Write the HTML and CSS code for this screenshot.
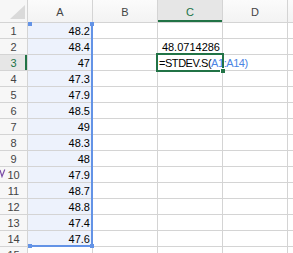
FILE: index.html
```html
<!DOCTYPE html>
<html lang="en">
<head>
  <meta charset="UTF-8">
  <title>STDEV.S sheet</title>
  <link rel="stylesheet" href="styles.css">
</head>
<body>
  <div class="sheet">
    <div class="grid">
      <div class="corner"><svg width="27" height="22" viewBox="0 0 27 22"><polygon points="10,19 25,19 25,5" fill="#dadada"/></svg></div>
      <div class="colhead">A</div>
      <div class="colhead">B</div>
      <div class="colhead active">C</div>
      <div class="colhead">D</div>
      <div class="colhead"></div>

      <div class="rowhead">1</div><div class="cell num sel">48.2</div><div class="cell"></div><div class="cell"></div><div class="cell"></div><div class="cell"></div>
      <div class="rowhead">2</div><div class="cell num sel">48.4</div><div class="cell"></div><div class="cell num">48.0714286</div><div class="cell"></div><div class="cell"></div>
      <div class="rowhead active">3</div><div class="cell num sel">47</div><div class="cell"></div><div class="cell current">=STDEV.S(<span class="ref">A1:A14)</span></div><div class="cell"></div><div class="cell"></div>
      <div class="rowhead">4</div><div class="cell num sel">47.3</div><div class="cell"></div><div class="cell"></div><div class="cell"></div><div class="cell"></div>
      <div class="rowhead">5</div><div class="cell num sel">47.9</div><div class="cell"></div><div class="cell"></div><div class="cell"></div><div class="cell"></div>
      <div class="rowhead">6</div><div class="cell num sel">48.5</div><div class="cell"></div><div class="cell"></div><div class="cell"></div><div class="cell"></div>
      <div class="rowhead">7</div><div class="cell num sel">49</div><div class="cell"></div><div class="cell"></div><div class="cell"></div><div class="cell"></div>
      <div class="rowhead">8</div><div class="cell num sel">48.3</div><div class="cell"></div><div class="cell"></div><div class="cell"></div><div class="cell"></div>
      <div class="rowhead">9</div><div class="cell num sel">48</div><div class="cell"></div><div class="cell"></div><div class="cell"></div><div class="cell"></div>
      <div class="rowhead">10</div><div class="cell num sel">47.9</div><div class="cell"></div><div class="cell"></div><div class="cell"></div><div class="cell"></div>
      <div class="rowhead">11</div><div class="cell num sel">48.7</div><div class="cell"></div><div class="cell"></div><div class="cell"></div><div class="cell"></div>
      <div class="rowhead">12</div><div class="cell num sel">48.8</div><div class="cell"></div><div class="cell"></div><div class="cell"></div><div class="cell"></div>
      <div class="rowhead">13</div><div class="cell num sel">47.4</div><div class="cell"></div><div class="cell"></div><div class="cell"></div><div class="cell"></div>
      <div class="rowhead">14</div><div class="cell num sel">47.6</div><div class="cell"></div><div class="cell"></div><div class="cell"></div><div class="cell"></div>
      <div class="rowhead">15</div><div class="cell"></div><div class="cell"></div><div class="cell"></div><div class="cell"></div><div class="cell"></div>
    </div>

    <!-- range highlight for A1:A14 -->
    <div class="range">
      <span class="handle tl"></span><span class="handle tr"></span>
      <span class="handle bl"></span><span class="handle br"></span>
    </div>

    <svg class="stray" width="6" height="9" viewBox="0 0 6 9"><path d="M0 1 L2 7.5 L4.8 0.5" stroke="#7d4fa8" stroke-width="1.2" fill="none"/></svg>
  </div>
</body>
</html>
```

FILE: styles.css
```css
html, body { margin: 0; padding: 0; background: #fff; overflow: hidden; }
body { font-family: "Liberation Sans", Arial, sans-serif; font-size: 11px; color: #000; }

.sheet { position: relative; width: 293px; height: 253px; overflow: hidden; }

.grid {
  display: grid;
  grid-template-columns: 27px repeat(4, 64px) 5px;
  grid-template-rows: 22px repeat(15, 15px);
  gap: 1px;
  background: #d4d4d4;
}

.corner { background: #f7f7f7; }
.corner svg { display: block; }

.colhead {
  background: linear-gradient(#fbfbfb, #f3f3f3);
  color: #444;
  display: flex;
  align-items: center;
  justify-content: center;
  padding-top: 1px;
  box-sizing: border-box;
}
.colhead.active { background: #e6e6e6; color: #217346; border-bottom: 2px solid #217346; padding-top: 3px; }

.rowhead {
  background: #f7f7f7;
  color: #444;
  display: flex;
  align-items: flex-end;
  justify-content: center;
  line-height: 13px;
}
.rowhead.active { background: #e6e6e6; color: #217346; border-right: 2px solid #217346; padding-left: 2px; }

.cell {
  background: #fff;
  display: flex;
  align-items: flex-end;
  line-height: 13px;
  padding: 0 2px;
  white-space: nowrap;
}
.cell.num { justify-content: flex-end; }
.cell.sel { background: #edf2fc; }

.cell.current {
  position: relative;
  z-index: 1;
  overflow: visible;
  padding-left: 1px;
  letter-spacing: -0.45px;
  outline: 2px solid #217346;
}
.cell.current .ref { color: #4a84e4; }
.cell.current::after {
  content: "";
  position: absolute;
  right: -3px;
  bottom: -3px;
  width: 4px;
  height: 4px;
  background: #217346;
  border-left: 1px solid #fff;
  border-top: 1px solid #fff;
}

.range {
  position: absolute;
  left: 28px;
  top: 23px;
  width: 65px;
  height: 224px;
  box-sizing: border-box;
  border-right: 2px solid #6393e6;
  border-bottom: 2px solid #6393e6;
}
.handle { position: absolute; width: 4px; height: 4px; background: #6393e6; }
.handle.tl { left: 0; top: -1px; }
.handle.tr { right: -3px; top: -1px; }
.handle.bl { left: 0; bottom: -3px; }
.handle.br { right: -3px; bottom: -3px; }

.stray { position: absolute; left: 0; top: 169px; }
```
